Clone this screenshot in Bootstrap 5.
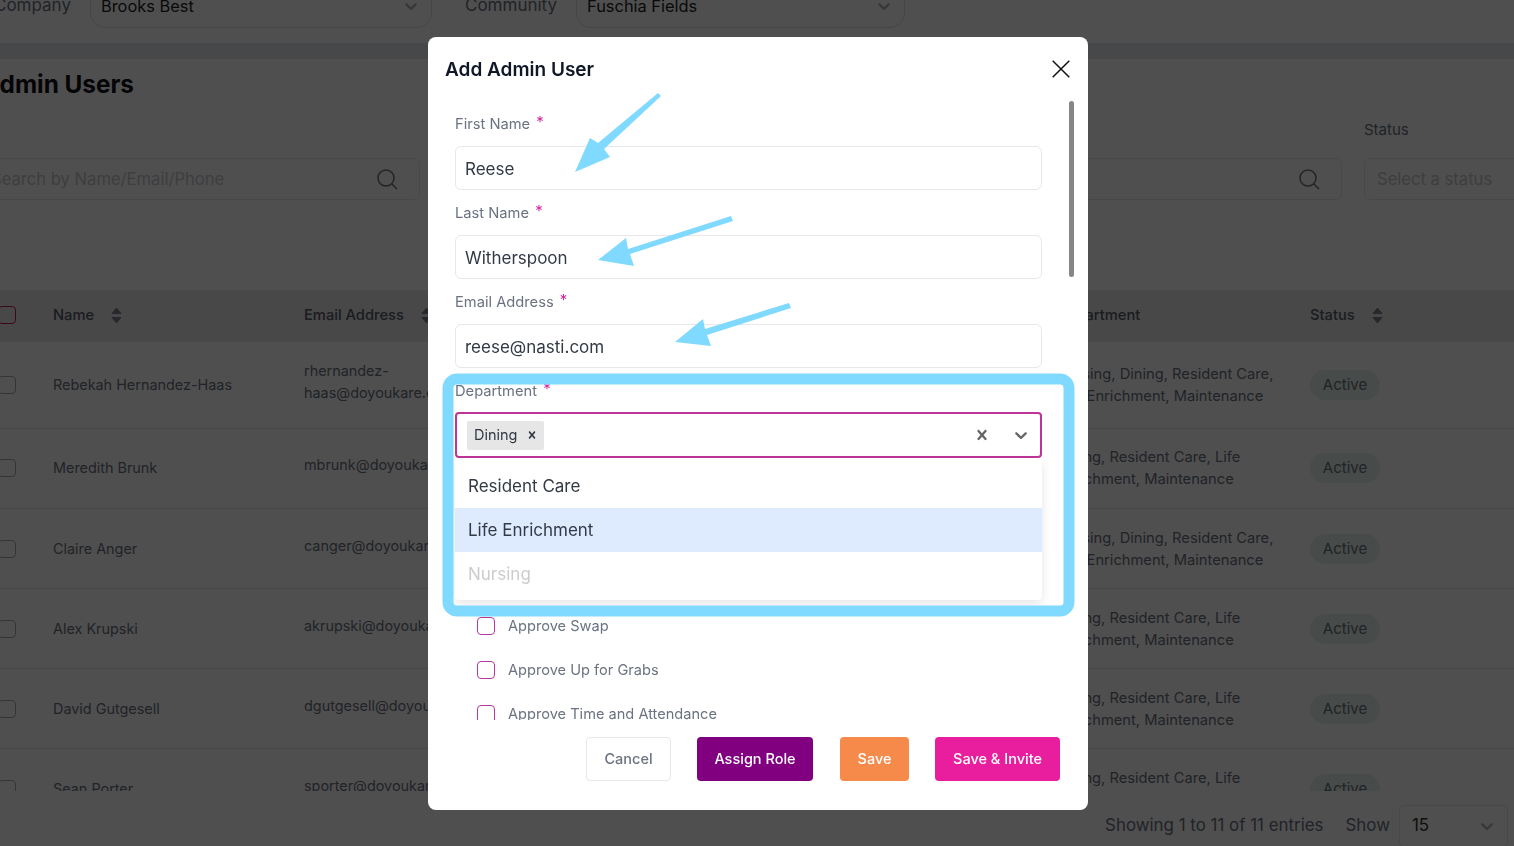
<!DOCTYPE html>
<html lang="en">
<head>
  <meta charset="UTF-8" />
  <meta name="viewport" content="width=device-width, initial-scale=1.0"/>
  <title>Admin Users</title>
  <link href="https://cdn.jsdelivr.net/npm/bootstrap@5.3.0/dist/css/bootstrap.min.css" rel="stylesheet"/>
  <style>
    html, body { height: 846px; overflow: hidden; }
    body { font-family: Inter, "Liberation Sans", sans-serif; background: #fff; color: #6b7280; }

    /* page behind the modal, it is scrolled a bit so it starts off screen */
    .page-shell { width: 1580px; height: 863px; margin: -17px 0 0 -26px; overflow: hidden; }
    .top-filters { height: 60px; padding: 0 0 14px 20px; }
    .top-filters .caption { font-size: 17px; color: #6b7280; }
    .fake-select { height: 44px; border: 1px solid #dfe1e6; border-radius: 15px; padding: 0 10px 0 10px; font-size: 16.4px; color: #222; }
    .company-select { width: 342px; margin-left: 19px; margin-right: 33px; }
    .community-select { width: 329px; margin-left: 19px; }
    .gray-strip { height: 16px; background: #e3e8ef; }
    .page-title { font-size: 24.3px; font-weight: 700; color: #101018; margin: 0; padding: 11px 0 0 8px; height: 52px; }
    .filter-row { height: 179px; }
    .search-one { width: 446px; flex: none; }
    .search-two { width: 900px; margin-left: 22px; flex: none; }
    .status-filter { width: 175px; margin-left: 22px; flex: none; }
    .filter-label { font-size: 15px; height: 47px; padding-top: 8px; color: #6b7280; }
    .filter-box { height: 42px; border: 1px solid #e6e8ec; border-radius: 6px; padding: 0 21px 0 12px; font-size: 16.6px; color: #c6c8cc; }
    .search-one .filter-box { padding-left: 16px; }

    .table-clip { height: 501px; overflow: hidden; }
    .admin-table { table-layout: fixed; width: 1560px; margin: 0; font-size: 14.4px; }
    .admin-table th, .admin-table td { background: transparent; padding: 0; vertical-align: middle; color: #6b7280; border-bottom: 1px solid #e3e4e8; }
    .admin-table thead th { background: #e8e8e8; height: 52px; font-weight: 500; color: #555b66; border-bottom: 0; font-size: 14.7px; padding-bottom: 2px; }
    .admin-table tbody tr { height: 80px; }
    .admin-table tbody tr.tall-row { height: 86px; }
    .admin-table tbody tr:nth-child(3) td { padding-top: 1px; }
    .admin-table tbody tr:nth-child(n+4) td { padding-top: 2px; }
    .table-box { width: 18px; height: 18px; border: 1.5px solid #a8abb2; border-radius: 4px; margin-left: 24px; }
    .table-box.head-box { border-color: #c2185b; }
    .email-cell { line-height: 22px; padding-bottom: 6px !important; }
    .dept-cell { line-height: 22px; font-size: 14.7px; }
    .sort-icon { margin-left: 17px; vertical-align: -4px; }
    .state-pill { background: #e6f2ea; color: #6b7280; font-weight: 400; font-size: 15px; height: 30px; width: 70px; padding: 7px 0 0; border-radius: 15px; }
    .list-footer { height: 68px; padding: 2px 6px 0 0; font-size: 16.9px; color: #6b7280; width: 1540px; }
    .showing-text { margin-right: 22px; }
    .page-size { width: 109px; height: 42px; margin-left: 9px; border: 1px solid #e6e8ec; border-radius: 4px; padding: 0 10px 0 12px; color: #333; }

    /* modal */
    .modal-backdrop.show { opacity: .69; }
    .modal-dialog.admin-dialog { max-width: 660px; width: 660px; margin: 37px 0 0 428px; }
    .admin-dialog .modal-content { height: 773px; border: 0; border-radius: 8px; }
    .admin-dialog .modal-header { height: 63px; padding: 0 18px 0 17px; border: 0; }
    .admin-dialog .modal-title { font-size: 19px; font-weight: 600; color: #101828; margin-top: 4px; }
    .admin-dialog .close-x { width: 18px; height: 18px; padding: 0; margin: 0; border: 0; background: none; line-height: 0; }
    .admin-body { padding: 1px 46px 0 27px; overflow: hidden; flex: 1 1 auto; position: relative; }
    .thumb-bar { position: absolute; right: 14px; top: 1px; width: 5px; height: 176px; border-radius: 3px; background: #868686; }
    .field-wrap { padding-top: 11px; }
    .field-wrap .form-label { height: 22px; line-height: 24px; margin-bottom: 12px; font-size: 14.7px; color: #6b7280; display: block; }
    .req-star { color: #d6249f; margin-left: 2px; font-size: 15px; position: relative; top: -2px; }
    .field-wrap .form-control { height: 44px; border: 1px solid #e6e8ec; border-radius: 6px; font-size: 17px; color: #333a45; padding: 1px 9px 0; }
    .dept-field { position: relative; }
    .dept-field .form-label { margin-bottom: 11px; }
    .dept-control { height: 46px; border: 2px solid #c0349a; border-radius: 4px; padding: 0 9px 0 10px; }
    .dept-tag { height: 29px; background: #e6e6e6; border-radius: 2px; padding: 0 5px 0 7px; font-size: 14.5px; color: #333a45; gap: 7px; }
    .dept-icons { gap: 19px; }
    .dept-menu { position: absolute; top: 90px; left: 0; right: 0; height: 142px; padding: 6px 0 4px; border-radius: 4px; background: #fff; box-shadow: 0 4px 11px rgba(0,0,0,.1); z-index: 2; }
    .dept-menu .list-group-item { height: 44px; border: 0; padding: 2px 13px 0; font-size: 17px; color: #333a45; background: transparent; display: flex; align-items: center; border-radius: 0; }
    .dept-menu .list-group-item.focused-item { background: #deebff; }
    .dept-menu .list-group-item.disabled { color: #cccccc; }
    .perm-list { margin-top: 146px; padding-left: 22px; }
    .perm-row { height: 44px; gap: 13px; font-size: 14.6px; color: #6b7280; }
    .perm-row span { padding-top: 1px; }
    .perm-row .form-check-input { width: 18px; height: 18px; margin: 0; border: 1.5px solid #b5369c; border-radius: 4px; flex: none; }
    .admin-dialog .modal-footer { height: 90px; padding: 17px 28px 29px 0; border: 0; gap: 26px; align-items: flex-start; flex-wrap: nowrap; }
    .admin-dialog .modal-footer .btn { height: 44px; margin: 0; font-size: 14.5px; font-weight: 500; border-radius: 4px; padding: 0; border: 0; }
    .btn-cancel { width: 85px; color: #6b7280; border: 1px solid #e6e8ec !important; background: #fff; }
    .btn-assign { width: 116px; color: #fff; background: #800080; }
    .admin-dialog .modal-footer .btn-assign { margin-right: 1px; }
    .btn-save { width: 69px; color: #fff; background: #f58a4b; }
    .btn-invite { width: 125px; color: #fff; background: #e91e9e; }
    .note-layer { position: fixed; top: 0; left: 0; z-index: 1100; pointer-events: none; }
  </style>
</head>
<body>

<div class="page-shell">
  <div class="top-filters d-flex align-items-center">
    <span class="caption">Company</span>
    <div class="fake-select company-select d-flex align-items-center justify-content-between">
      <span>Brooks Best</span>
      <svg width="20" height="20" viewBox="0 0 20 20" fill="#b5b5b5"><path d="M4.516 7.548c0.436-0.446 1.043-0.481 1.576 0l3.908 3.747 3.908-3.747c0.533-0.481 1.141-0.446 1.574 0 0.436 0.445 0.408 1.197 0 1.615-0.406 0.418-4.695 4.502-4.695 4.502-0.217 0.223-0.502 0.335-0.787 0.335s-0.57-0.112-0.789-0.335c0 0-4.287-4.084-4.695-4.502s-0.436-1.17 0-1.615z"/></svg>
    </div>
    <span class="caption">Community</span>
    <div class="fake-select community-select d-flex align-items-center justify-content-between">
      <span>Fuschia Fields</span>
      <svg width="20" height="20" viewBox="0 0 20 20" fill="#b5b5b5"><path d="M4.516 7.548c0.436-0.446 1.043-0.481 1.576 0l3.908 3.747 3.908-3.747c0.533-0.481 1.141-0.446 1.574 0 0.436 0.445 0.408 1.197 0 1.615-0.406 0.418-4.695 4.502-4.695 4.502-0.217 0.223-0.502 0.335-0.787 0.335s-0.57-0.112-0.789-0.335c0 0-4.287-4.084-4.695-4.502s-0.436-1.17 0-1.615z"/></svg>
    </div>
  </div>
  <div class="gray-strip"></div>

  <h1 class="page-title">Admin Users</h1>

  <div class="filter-row d-flex align-items-start">
    <div class="search-one">
      <div class="filter-label">&nbsp;</div>
      <div class="filter-box d-flex align-items-center justify-content-between">
        <span>Search by Name/Email/Phone</span>
        <svg width="22" height="22" viewBox="0 0 22 22" fill="none" stroke="#6f7278" stroke-width="1.5"><circle cx="10" cy="10" r="8"/><path d="M16 16l5 5"/></svg>
      </div>
    </div>
    <div class="search-two">
      <div class="filter-label">&nbsp;</div>
      <div class="filter-box d-flex align-items-center justify-content-end">
        <svg width="22" height="22" viewBox="0 0 22 22" fill="none" stroke="#6f7278" stroke-width="1.5"><circle cx="10" cy="10" r="8"/><path d="M16 16l5 5"/></svg>
      </div>
    </div>
    <div class="status-filter">
      <div class="filter-label">Status</div>
      <div class="filter-box d-flex align-items-center">Select a status</div>
    </div>
  </div>

  <div class="table-clip">
    <table class="table admin-table">
      <colgroup>
        <col style="width:79px"><col style="width:251px"><col style="width:753px"><col style="width:253px"><col>
      </colgroup>
      <thead>
        <tr>
          <th><div class="table-box head-box"></div></th>
          <th>Name<svg class="sort-icon" width="11" height="17" viewBox="0 0 11 17" fill="#7f838b" stroke="#7f838b" stroke-linejoin="round"><path d="M5.5 1L10 6.5H1zM5.5 16L1 10.5H10z"/></svg></th>
          <th>Email Address<svg class="sort-icon" width="11" height="17" viewBox="0 0 11 17" fill="#7f838b" stroke="#7f838b" stroke-linejoin="round"><path d="M5.5 1L10 6.5H1zM5.5 16L1 10.5H10z"/></svg></th>
          <th>Department</th>
          <th>Status<svg class="sort-icon" width="11" height="17" viewBox="0 0 11 17" fill="#7f838b" stroke="#7f838b" stroke-linejoin="round"><path d="M5.5 1L10 6.5H1zM5.5 16L1 10.5H10z"/></svg></th>
        </tr>
      </thead>
      <tbody>
        <tr class="tall-row"><td><div class="table-box"></div></td><td>Rebekah Hernandez-Haas</td><td class="email-cell">rhernandez-<br>haas@doyoukare.com</td><td class="dept-cell">Nursing, Dining, Resident Care,<br>Life Enrichment, Maintenance</td><td><span class="badge state-pill">Active</span></td></tr>
        <tr><td><div class="table-box"></div></td><td>Meredith Brunk</td><td class="email-cell">mbrunk@doyoukare.com</td><td class="dept-cell">Dining, Resident Care, Life<br>Enrichment, Maintenance</td><td><span class="badge state-pill">Active</span></td></tr>
        <tr><td><div class="table-box"></div></td><td>Claire Anger</td><td class="email-cell">canger@doyoukare.com</td><td class="dept-cell">Nursing, Dining, Resident Care,<br>Life Enrichment, Maintenance</td><td><span class="badge state-pill">Active</span></td></tr>
        <tr><td><div class="table-box"></div></td><td>Alex Krupski</td><td class="email-cell">akrupski@doyoukare.com</td><td class="dept-cell">Dining, Resident Care, Life<br>Enrichment, Maintenance</td><td><span class="badge state-pill">Active</span></td></tr>
        <tr><td><div class="table-box"></div></td><td>David Gutgesell</td><td class="email-cell">dgutgesell@doyoukare.com</td><td class="dept-cell">Dining, Resident Care, Life<br>Enrichment, Maintenance</td><td><span class="badge state-pill">Active</span></td></tr>
        <tr><td><div class="table-box"></div></td><td>Sean Porter</td><td class="email-cell">sporter@doyoukare.com</td><td class="dept-cell">Dining, Resident Care, Life<br>Enrichment, Maintenance</td><td><span class="badge state-pill">Active</span></td></tr>
      </tbody>
    </table>
  </div>

  <div class="list-footer d-flex align-items-center justify-content-end">
    <span class="showing-text">Showing 1 to 11 of 11 entries</span>
    <span>Show</span>
    <div class="page-size d-flex align-items-center justify-content-between">
      <span>15</span>
      <svg width="20" height="20" viewBox="0 0 20 20" fill="#b5b5b5"><path d="M4.516 7.548c0.436-0.446 1.043-0.481 1.576 0l3.908 3.747 3.908-3.747c0.533-0.481 1.141-0.446 1.574 0 0.436 0.445 0.408 1.197 0 1.615-0.406 0.418-4.695 4.502-4.695 4.502-0.217 0.223-0.502 0.335-0.787 0.335s-0.57-0.112-0.789-0.335c0 0-4.287-4.084-4.695-4.502s-0.436-1.17 0-1.615z"/></svg>
    </div>
  </div>
</div>

<div class="modal-backdrop fade show"></div>

<div class="modal d-block" tabindex="-1">
  <div class="modal-dialog admin-dialog">
    <div class="modal-content">
      <div class="modal-header">
        <h5 class="modal-title">Add Admin User</h5>
        <button type="button" class="close-x" aria-label="Close">
          <svg width="18" height="18" viewBox="0 0 18 18" fill="none" stroke="#111" stroke-width="1.5"><path d="M0.7 0.7L17.3 17.3M17.3 0.7L0.7 17.3"/></svg>
        </button>
      </div>

      <div class="modal-body admin-body">
        <div class="thumb-bar"></div>
        <div class="field-wrap">
          <label class="form-label">First Name <span class="req-star">*</span></label>
          <input type="text" class="form-control" value="Reese">
        </div>
        <div class="field-wrap">
          <label class="form-label">Last Name <span class="req-star">*</span></label>
          <input type="text" class="form-control" value="Witherspoon">
        </div>
        <div class="field-wrap">
          <label class="form-label">Email Address <span class="req-star">*</span></label>
          <input type="text" class="form-control" value="reese@nasti.com">
        </div>
        <div class="field-wrap dept-field">
          <label class="form-label">Department <span class="req-star">*</span></label>
          <div class="dept-control d-flex align-items-center justify-content-between">
            <span class="dept-tag d-inline-flex align-items-center">Dining
              <svg width="14" height="14" viewBox="0 0 20 20" fill="#333a45"><path d="M14.348 14.849c-0.469 0.469-1.229 0.469-1.697 0l-2.651-3.030-2.651 3.029c-0.469 0.469-1.229 0.469-1.697 0-0.469-0.469-0.469-1.229 0-1.697l2.758-3.15-2.759-3.152c-0.469-0.469-0.469-1.228 0-1.697s1.228-0.469 1.697 0l2.652 3.031 2.651-3.031c0.469-0.469 1.228-0.469 1.697 0s0.469 1.229 0 1.697l-2.758 3.152 2.758 3.15c0.469 0.469 0.469 1.229 0 1.698z"/></svg>
            </span>
            <span class="dept-icons d-flex align-items-center">
              <svg width="20" height="20" viewBox="0 0 20 20" fill="#666"><path d="M14.348 14.849c-0.469 0.469-1.229 0.469-1.697 0l-2.651-3.030-2.651 3.029c-0.469 0.469-1.229 0.469-1.697 0-0.469-0.469-0.469-1.229 0-1.697l2.758-3.15-2.759-3.152c-0.469-0.469-0.469-1.228 0-1.697s1.228-0.469 1.697 0l2.652 3.031 2.651-3.031c0.469-0.469 1.228-0.469 1.697 0s0.469 1.229 0 1.697l-2.758 3.152 2.758 3.15c0.469 0.469 0.469 1.229 0 1.698z"/></svg>
              <svg width="20" height="20" viewBox="0 0 20 20" fill="#666"><path d="M4.516 7.548c0.436-0.446 1.043-0.481 1.576 0l3.908 3.747 3.908-3.747c0.533-0.481 1.141-0.446 1.574 0 0.436 0.445 0.408 1.197 0 1.615-0.406 0.418-4.695 4.502-4.695 4.502-0.217 0.223-0.502 0.335-0.787 0.335s-0.57-0.112-0.789-0.335c0 0-4.287-4.084-4.695-4.502s-0.436-1.17 0-1.615z"/></svg>
            </span>
          </div>
          <div class="dept-menu list-group">
            <div class="list-group-item">Resident Care</div>
            <div class="list-group-item focused-item">Life Enrichment</div>
            <div class="list-group-item disabled">Nursing</div>
          </div>
        </div>

        <div class="perm-list">
          <div class="perm-row d-flex align-items-center"><input class="form-check-input" type="checkbox"><span>Approve Swap</span></div>
          <div class="perm-row d-flex align-items-center"><input class="form-check-input" type="checkbox"><span>Approve Up for Grabs</span></div>
          <div class="perm-row d-flex align-items-center"><input class="form-check-input" type="checkbox"><span>Approve Time and Attendance</span></div>
        </div>
      </div>

      <div class="modal-footer">
        <button type="button" class="btn btn-cancel">Cancel</button>
        <button type="button" class="btn btn-assign">Assign Role</button>
        <button type="button" class="btn btn-save">Save</button>
        <button type="button" class="btn btn-invite">Save &amp; Invite</button>
      </div>
    </div>
  </div>
</div>

<!-- blue annotations drawn on top of the screenshot -->
<svg class="note-layer" width="1514" height="846" viewBox="0 0 1514 846">
  <rect x="448" y="379" width="621" height="232" rx="9" fill="none" stroke="#80d9ff" stroke-width="11"/>
  <g fill="#80d9ff">
    <path d="M658 93L661 96L604 149L610 157L575 172L590 138L598 143z"/>
    <path d="M731 216L733 221L630 254L634 266L598 260L626 238L628 249z"/>
    <path d="M789 303L791 308L707 335L711 346L675 342L703 319L705 329z"/>
  </g>
</svg>

</body>
</html>
